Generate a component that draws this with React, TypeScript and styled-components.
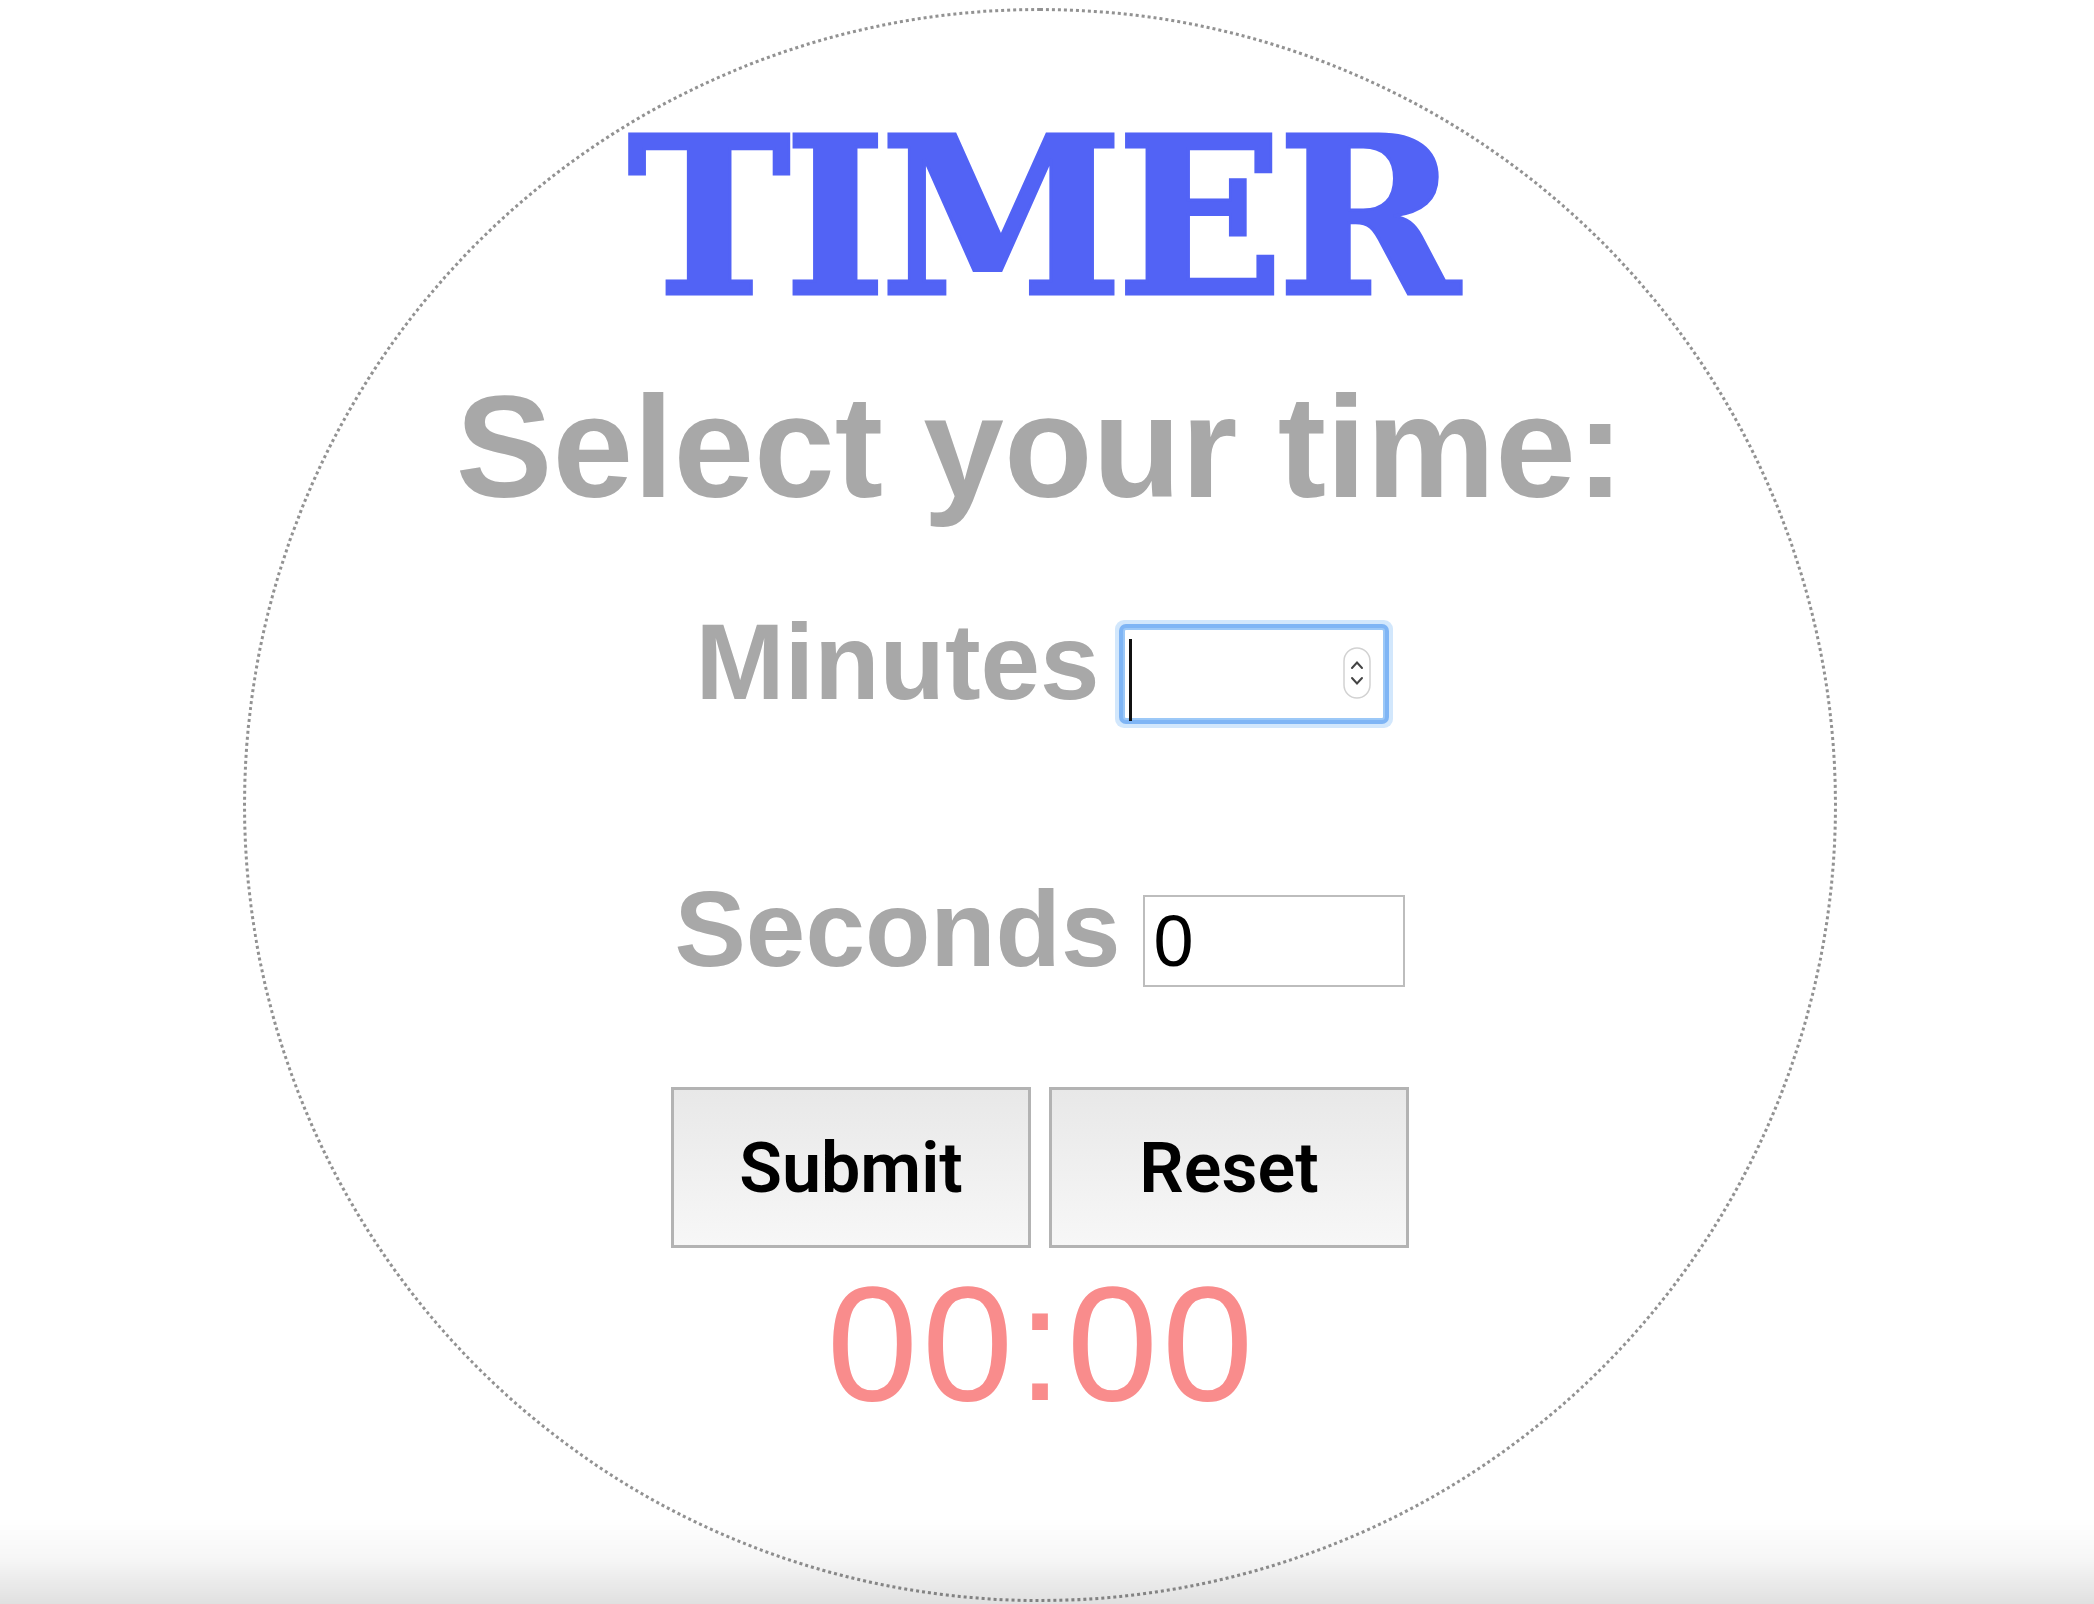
import React, { useEffect, useState } from "react";
import styled, { createGlobalStyle } from "styled-components";

const GlobalStyle = createGlobalStyle`
  html, body {
    overflow: hidden;
    background: #ffffff;
  }
  body {
    margin: 8px 22px 0 8px;
  }
`;

const Circle = styled.div`
  width: 1588px;
  height: 1588px;
  margin: 0 auto;
  border: 3px dotted #929292;
  border-radius: 50%;
  display: flex;
  flex-direction: column;
  align-items: center;
  font-family: "Liberation Sans", Arial, sans-serif;
`;

const Title = styled.h1`
  margin: 95px 0 0;
  font-family: "DejaVu Serif", "Liberation Serif", serif;
  font-size: 220px;
  line-height: 222px;
  font-weight: bold;
  letter-spacing: -7px;
  color: #5263f5;
  -webkit-text-stroke: 3px #5263f5;
`;

const Prompt = styled.h2`
  margin: 47px 0 0;
  font-size: 145px;
  line-height: 145px;
  font-weight: bold;
  color: #a8a8a8;
`;

const FieldRow = styled.div<{ $gap: number }>`
  margin-top: ${(p) => p.$gap}px;
  display: flex;
  align-items: baseline;
  gap: 23px;
`;

const FieldLabel = styled.label`
  font-size: 107px;
  line-height: 107px;
  font-weight: bold;
  color: #a8a8a8;
`;

const InputWrap = styled.span`
  position: relative;
  display: inline-flex;
`;

const NumberInput = styled.input<{ $focused?: boolean }>`
  box-sizing: border-box;
  width: 262px;
  height: 92px;
  padding: 0 8px;
  font-family: "Liberation Sans", Arial, sans-serif;
  font-size: 72px;
  line-height: 88px;
  color: #000;
  background: #fff;
  outline: none;
  border: 2px solid ${(p) => (p.$focused ? "#9cc8f7" : "#bdbdbd")};
  box-shadow: ${(p) =>
    p.$focused ? "0 0 0 4px #7fb5f5, 0 0 0 8px #d2e7fc" : "none"};
  border-radius: ${(p) => (p.$focused ? "3px" : "0")};
  appearance: textfield;
  -moz-appearance: textfield;
  &::-webkit-inner-spin-button,
  &::-webkit-outer-spin-button {
    -webkit-appearance: none;
    margin: 0;
  }
`;

const Caret = styled.span`
  position: absolute;
  left: 6px;
  top: 11px;
  width: 3px;
  height: 82px;
  background: #111;
`;

const Spinner = styled.svg`
  position: absolute;
  right: 14px;
  top: 19px;
`;

const ButtonRow = styled.div`
  margin-top: 100px;
  display: flex;
  gap: 18px;
`;

const ActionButton = styled.button`
  box-sizing: border-box;
  width: 360px;
  height: 161px;
  border: 3px solid #b3b3b3;
  background: linear-gradient(#e8e8e8, #f7f7f7);
  font-family: Roboto, "Liberation Sans", sans-serif;
  font-weight: 600;
  font-size: 70px;
  color: #000;
  cursor: pointer;
`;

const Countdown = styled.div`
  margin-top: 14px;
  padding-left: 4px;
  font-size: 164px;
  line-height: 164px;
  letter-spacing: 4px;
  color: #f98c8c;
`;

const BottomShade = styled.div`
  position: fixed;
  left: 0;
  right: 0;
  bottom: 0;
  height: 86px;
  pointer-events: none;
  background: linear-gradient(rgba(0, 0, 0, 0), rgba(0, 0, 0, 0.03) 45%, rgba(0, 0, 0, 0.12));
`;

const pad = (n: number) => String(n).padStart(2, "0");

export default function App() {
  const [minutes, setMinutes] = useState("");
  const [seconds, setSeconds] = useState("0");
  const [left, setLeft] = useState(0);
  const [running, setRunning] = useState(false);

  useEffect(() => {
    if (!running) return;
    const id = setInterval(() => {
      setLeft((t) => {
        if (t <= 1) {
          setRunning(false);
          return 0;
        }
        return t - 1;
      });
    }, 1000);
    return () => clearInterval(id);
  }, [running]);

  const submit = () => {
    const total = (parseInt(minutes) || 0) * 60 + (parseInt(seconds) || 0);
    setLeft(total);
    setRunning(total > 0);
  };

  const reset = () => {
    setRunning(false);
    setLeft(0);
    setMinutes("");
    setSeconds("0");
  };

  return (
    <>
      <GlobalStyle />
      <Circle>
        <Title>TIMER</Title>
        <Prompt>Select your time:</Prompt>
        <FieldRow $gap={89}>
          <FieldLabel htmlFor="minutes">Minutes</FieldLabel>
          <InputWrap>
            <NumberInput
              id="minutes"
              type="number"
              $focused
              value={minutes}
              onChange={(e) => setMinutes(e.target.value)}
            />
            {minutes === "" && <Caret />}
            <Spinner width="28" height="52" viewBox="0 0 28 52">
              <rect x="1" y="1" width="26" height="50" rx="13" fill="#fff" stroke="#d2d2d2" strokeWidth="1.5" />
              <path d="M9 21 L14 15.5 L19 21" fill="none" stroke="#444" strokeWidth="2" strokeLinecap="round" />
              <path d="M9 31 L14 36.5 L19 31" fill="none" stroke="#444" strokeWidth="2" strokeLinecap="round" />
            </Spinner>
          </InputWrap>
        </FieldRow>
        <FieldRow $gap={156}>
          <FieldLabel htmlFor="seconds">Seconds</FieldLabel>
          <NumberInput
            id="seconds"
            type="number"
            value={seconds}
            onChange={(e) => setSeconds(e.target.value)}
          />
        </FieldRow>
        <ButtonRow>
          <ActionButton onClick={submit}>Submit</ActionButton>
          <ActionButton onClick={reset}>Reset</ActionButton>
        </ButtonRow>
        <Countdown>
          {pad(Math.floor(left / 60))}:{pad(left % 60)}
        </Countdown>
      </Circle>
      <BottomShade />
    </>
  );
}
